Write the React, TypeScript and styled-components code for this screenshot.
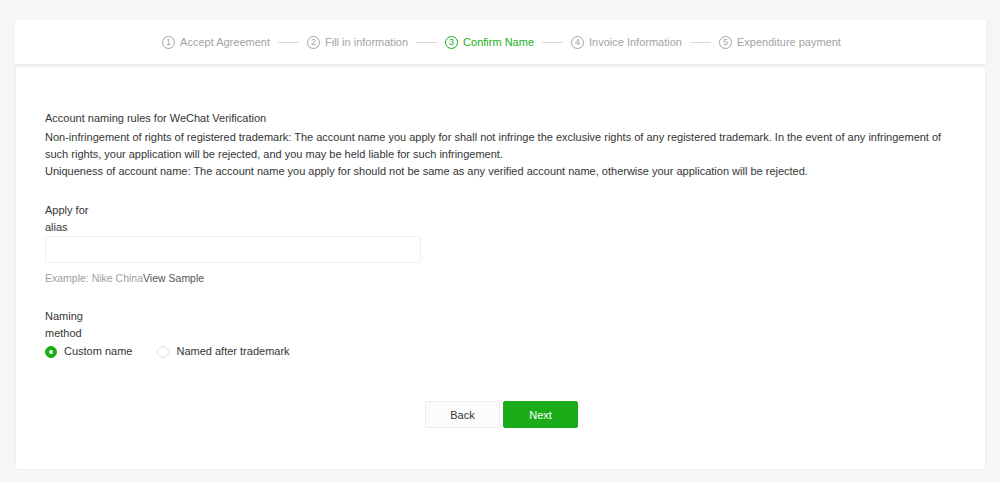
import styled, { createGlobalStyle } from "styled-components";

const GlobalStyle = createGlobalStyle`
  html, body {
    margin: 0;
    padding: 0;
    background: #f6f6f7;
  }
  body {
    font-family: "Liberation Sans", Arial, sans-serif;
    color: #353535;
  }
`;

const Page = styled.div`
  width: 1000px;
  height: 482px;
  box-sizing: border-box;
  padding: 20px 14px 12px 15px;
  display: flex;
  flex-direction: column;
  gap: 2px;
`;

const StepsBar = styled.div`
  height: 44px;
  background: #fff;
  box-shadow: 0 1px 2px rgba(0, 0, 0, 0.06);
  display: flex;
  align-items: center;
  justify-content: center;
  padding-left: 2px;
`;

const Step = styled.div<{ $active?: boolean }>`
  display: flex;
  align-items: center;
  gap: 5px;
  font-size: 11px;
  color: ${(p) => (p.$active ? "#1aad19" : "#a3a3a3")};
`;

const StepNum = styled.span`
  width: 11px;
  height: 11px;
  border: 1px solid currentColor;
  border-radius: 50%;
  display: inline-flex;
  align-items: center;
  justify-content: center;
  font-size: 9px;
  line-height: 1;
`;

const StepLine = styled.span`
  width: 21px;
  height: 1px;
  background: #d9d9d9;
  margin: 0 8px;
`;

const Body = styled.div`
  flex: 1;
  background: #fff;
  border: 1px solid #f0f0f2;
  border-radius: 2px;
  padding: 43px 29px 0 29px;
  display: flex;
  flex-direction: column;
`;

const Title = styled.div`
  font-size: 11px;
  line-height: 17px;
  margin-bottom: 2px;
`;

const Para = styled.p`
  margin: 0;
  font-size: 11px;
  line-height: 17px;
`;

const Field = styled.div<{ $gap?: number }>`
  margin-top: ${(p) => p.$gap ?? 22}px;
  display: flex;
  flex-direction: column;
`;

const Label = styled.label`
  width: 60px;
  font-size: 11px;
  line-height: 17px;
`;

const Input = styled.input`
  width: 376px;
  height: 27px;
  box-sizing: border-box;
  border: 1px solid #efefef;
  border-radius: 2px;
  outline: none;
  padding: 0 8px;
`;

const Hint = styled.div`
  margin-top: 7px;
  font-size: 10.5px;
  line-height: 17px;
  color: #a0a0a0;
`;

const HintLink = styled.span`
  color: #555;
`;

const Radios = styled.div`
  display: flex;
  align-items: center;
  gap: 25px;
  margin-top: 1px;
`;

const RadioItem = styled.label`
  display: flex;
  align-items: center;
  gap: 7px;
  font-size: 11px;
  line-height: 17px;
`;

const RadioDot = styled.span<{ $checked?: boolean }>`
  width: 12px;
  height: 12px;
  box-sizing: border-box;
  border-radius: 50%;
  background: ${(p) => (p.$checked ? "#1aad19" : "#fff")};
  border: 1px solid ${(p) => (p.$checked ? "#1aad19" : "#e2e2e2")};
  display: inline-flex;
  align-items: center;
  justify-content: center;
  &::after {
    content: "";
    width: 4px;
    height: 4px;
    border-radius: 50%;
    background: #fff;
    display: ${(p) => (p.$checked ? "block" : "none")};
  }
`;

const Actions = styled.div`
  margin-top: 41px;
  display: flex;
  justify-content: center;
  gap: 3px;
  padding-left: 2px;
`;

const Button = styled.button<{ $primary?: boolean }>`
  width: 75px;
  height: 27px;
  border-radius: 2px;
  font-family: inherit;
  font-size: 11px;
  cursor: pointer;
  border: 1px solid ${(p) => (p.$primary ? "#1aad19" : "#ececef")};
  background: ${(p) => (p.$primary ? "#1aad19" : "#fcfcfd")};
  color: ${(p) => (p.$primary ? "#fff" : "#353535")};
`;

const steps = [
  "Accept Agreement",
  "Fill in information",
  "Confirm Name",
  "Invoice Information",
  "Expenditure payment",
];

export default function App() {
  return (
    <>
      <GlobalStyle />
      <Page>
        <StepsBar>
          {steps.map((s, i) => (
            <>
              {i > 0 && <StepLine key={"l" + i} />}
              <Step key={s} $active={i === 2}>
                <StepNum>{i + 1}</StepNum>
                {s}
              </Step>
            </>
          ))}
        </StepsBar>
        <Body>
          <Title>Account naming rules for WeChat Verification</Title>
          <Para>
            Non-infringement of rights of registered trademark: The account name you apply for
            shall not infringe the exclusive rights of any registered trademark. In the event of
            any infringement of such rights, your application will be rejected, and you may be
            held liable for such infringement.
          </Para>
          <Para>
            Uniqueness of account name: The account name you apply for should not be same as any
            verified account name, otherwise your application will be rejected.
          </Para>

          <Field>
            <Label>Apply for alias</Label>
            <Input type="text" />
            <Hint>
              Example: Nike China<HintLink>View Sample</HintLink>
            </Hint>
          </Field>

          <Field $gap={21}>
            <Label>Naming method</Label>
            <Radios>
              <RadioItem>
                <RadioDot $checked />
                Custom name
              </RadioItem>
              <RadioItem>
                <RadioDot />
                Named after trademark
              </RadioItem>
            </Radios>
          </Field>

          <Actions>
            <Button>Back</Button>
            <Button $primary>Next</Button>
          </Actions>
        </Body>
      </Page>
    </>
  );
}
